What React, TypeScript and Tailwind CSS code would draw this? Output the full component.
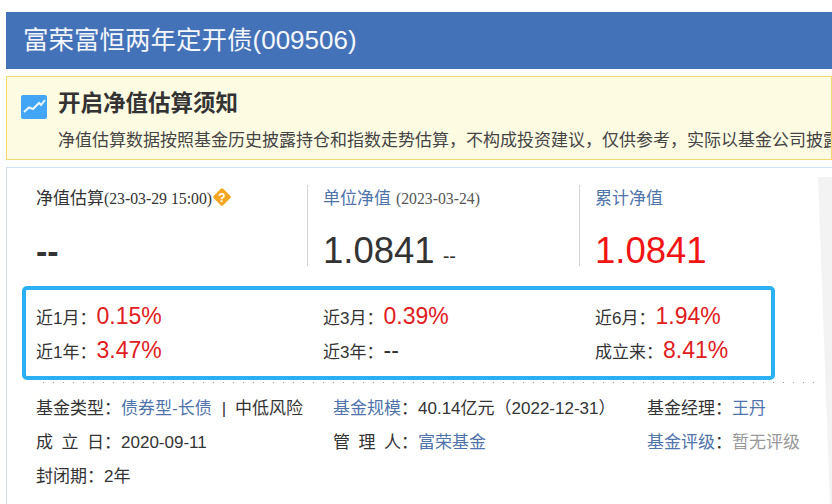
import React from "react";

const BLUE = "text-[#4f74ab]";
// full-width punctuation
const COLON = "\uFF1A";
const COMMA = "\uFF0C";
const LP = "\uFF08";
const RP = "\uFF09";

const Rate = ({ label, value }: { label: string; value: string }) => (
  <div className="flex h-[30px] items-baseline text-[17px] leading-[30px] text-[#333]">
    <span className="whitespace-nowrap">
      {label}
      {COLON}
    </span>
    <span className={value === "--" ? "text-[23px] text-[#333]" : "text-[23px] text-[#e02020]"}>{value}</span>
  </div>
);

const App = () => {
  return (
    <div
      className="relative h-[504px] w-[832px] overflow-hidden bg-white pl-[6px] pt-[12px] text-[#333]"
      style={{ fontFamily: '"Liberation Sans", "Noto Sans CJK SC", sans-serif' }}
    >
      {/* title */}
      <div className="flex h-[57px] items-center bg-[#4472b9] pl-[17px] text-[25.5px] text-[#f4f7fb]">
        富荣富恒两年定开债<span className="text-[26px]">(009506)</span>
      </div>

      {/* notice */}
      <div className="mt-[7px] h-[84px] overflow-hidden border border-[#f3d76f] bg-[#fefbe3] pl-[14px] pt-[12px]">
        <div className="flex items-center">
          <svg width="26" height="24" viewBox="0 0 26 24" className="mt-[6px] shrink-0">
            <rect width="26" height="24" rx="2" fill="#42a5f5" />
            <path d="M3 17 L8 12.5 L12 14 L18 8 L20 10 L24 5" fill="none" stroke="#fff" strokeWidth="2" opacity="0.9" />
          </svg>
          <span className="ml-[11px] text-[22.5px] font-bold leading-[28px] text-[#333]">开启净值估算须知</span>
        </div>
        <div className="ml-[37px] mt-[10px] whitespace-nowrap text-[17px] leading-[24px] text-[#444]">
          净值估算数据按照基金历史披露持仓和指数走势估算{COMMA}不构成投资建议{COMMA}仅供参考{COMMA}实际以基金公司披露净值为准
        </div>
      </div>

      {/* card */}
      <div className="relative mt-[7px] h-[340px] border-l border-t border-[#cfe1f2] pl-[15px] pt-[17px]">
        <div className="flex h-[81px] pl-[14px]">
          <div className="w-[271px]">
            <div className="flex h-[28px] items-center whitespace-nowrap text-[17px]">
              净值估算
              <span className="text-[15.75px]" style={{ fontFamily: '"Liberation Serif", serif' }}>
                (23-03-29 15:00)
              </span>
              <svg width="18" height="18" viewBox="0 0 18 18" className="mb-[5px] ml-[1px]">
                <path d="M9 2 L16 9 L9 16 L2 9 Z" fill="#f5a623" stroke="#f5a623" strokeWidth="3.5" strokeLinejoin="round" />
                <text x="9" y="13.5" textAnchor="middle" fontSize="12" fontWeight="700" fill="#fff">?</text>
              </svg>
            </div>
            <div className="mt-[19px] text-[34px] font-bold leading-[38px]">--</div>
          </div>
          <div className="w-[272px] border-l border-[#d5d5d5] pl-[15px]">
            <div className="flex h-[28px] items-center whitespace-nowrap text-[17px]">
              <span className={BLUE}>单位净值</span>
              <span className="ml-[5px] text-[15.75px] text-[#555]" style={{ fontFamily: '"Liberation Serif", serif' }}>
                (2023-03-24)
              </span>
            </div>
            <div className="mt-[17px] flex items-baseline leading-[41px]">
              <span className="text-[36.5px] text-[#333]">1.0841</span>
              <span className="ml-[8px] text-[20px]">--</span>
            </div>
          </div>
          <div className="border-l border-[#d5d5d5] pl-[15px]">
            <div className={`flex h-[28px] items-center text-[17px] ${BLUE}`}>累计净值</div>
            <div className="mt-[17px] text-[36.5px] leading-[41px] text-[#f01414]">1.0841</div>
          </div>
        </div>

        {/* rates */}
        <div className="mt-[20px] grid h-[94px] w-[753px] grid-cols-[287px_272px_1fr] content-center gap-y-[4px] rounded-[5px] border-[4px] border-[#2cb0f4] pl-[10px]">
          <Rate label="近1月" value="0.15%" />
          <Rate label="近3月" value="0.39%" />
          <Rate label="近6月" value="1.94%" />
          <Rate label="近1年" value="3.47%" />
          <Rate label="近3年" value="--" />
          <Rate label="成立来" value="8.41%" />
        </div>
        <div className="ml-[21px] mt-[2px] h-px w-[772px] bg-[repeating-linear-gradient(90deg,#999_0_1px,transparent_1px_10px)]" />

        {/* info */}
        <div className="mt-[9px] pl-[14px] text-[17px] leading-[34px]">
          <div className="grid grid-cols-[297px_314px_1fr] whitespace-nowrap">
            <div>
              基金类型{COLON}
              <span className={BLUE}>债券型-长债</span>
              <span className="ml-[10px] mr-[9px]">|</span>
              中低风险
            </div>
            <div>
              <span className={BLUE}>基金规模</span>
              {COLON}40.14亿元{LP}2022-12-31{RP}
            </div>
            <div>
              基金经理{COLON}
              <span className={BLUE}>王丹</span>
            </div>
          </div>
          <div className="grid grid-cols-[297px_314px_1fr] whitespace-nowrap">
            <div>
              <span className="[word-spacing:3.8px]">成 立 日</span>
              {COLON}2020-09-11
            </div>
            <div>
              <span className="[word-spacing:3.8px]">管 理 人</span>
              {COLON}
              <span className={BLUE}>富荣基金</span>
            </div>
            <div>
              <span className={BLUE}>基金评级</span>
              {COLON}
              <span className="text-[#999]">暂无评级</span>
            </div>
          </div>
          <div>封闭期{COLON}2年</div>
        </div>
      </div>

      {/* grey sliver at the right edge */}
      <svg className="absolute left-[816px] top-[177px]" width="16" height="327" viewBox="0 0 16 327">
        <path d="M2 0 H16 V327 H14 Z" fill="#f3f3f3" />
      </svg>
    </div>
  );
};

export default App;
